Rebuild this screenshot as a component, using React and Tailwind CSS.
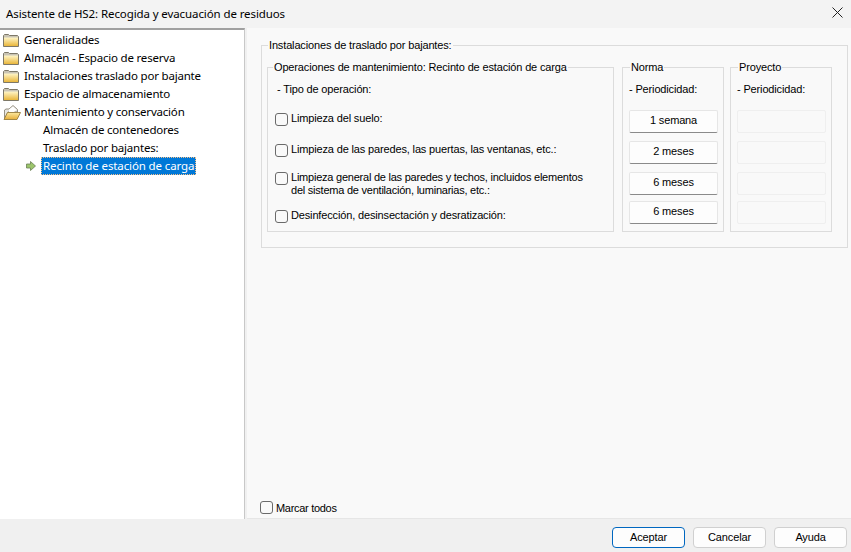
const treeFont = { fontFamily: '"Noto Sans", sans-serif' };

const FolderClosed = () => (
  <svg width="16" height="14" viewBox="0 0 16 14" className="shrink-0">
    <defs>
      <linearGradient id="fc" x1="0" y1="0" x2="0" y2="1">
        <stop offset="0" stopColor="#fff6c8" />
        <stop offset="1" stopColor="#e9b63c" />
      </linearGradient>
    </defs>
    <path d="M0.5 2.5 L1.5 1.5 H5.5 L6.5 2.5 H14.5 L15.5 3.5 V13.5 H0.5 Z" fill="#c9c4b4" stroke="#7d7868" />
    <path d="M1 4.5 H15 V13 H1 Z" fill="url(#fc)" />
  </svg>
);

const FolderOpen = () => (
  <svg width="18" height="15" viewBox="0 0 18 15" className="shrink-0">
    <defs>
      <linearGradient id="fo" x1="0" y1="0" x2="0" y2="1">
        <stop offset="0" stopColor="#fde9a0" />
        <stop offset="1" stopColor="#e6ae3a" />
      </linearGradient>
    </defs>
    <path d="M1.5 14 V5 L3 4 L6 4 L10 0.5 L14.5 4.5 V7 H5 Z" fill="#e8e6df" stroke="#8c8778" strokeWidth="0.9" />
    <path d="M6 4.5 L10 1.5 L13.5 4.8 L11 7 H6 Z" fill="#ffffff" />
    <path d="M1 14.5 L4.5 7.5 H17.5 L14 14.5 Z" fill="url(#fo)" stroke="#9a7f3c" strokeWidth="0.9" />
  </svg>
);

const ArrowIcon = () => (
  <svg width="10" height="10" viewBox="0 0 10 10" className="shrink-0">
    <path d="M0.5 3 H4.5 V0.5 L9.5 5 L4.5 9.5 V7 H0.5 Z" fill="#9cc56b" stroke="#6b7f55" strokeWidth="0.8" />
  </svg>
);

const Check = ({ className = '' }) => (
  <span className={`block w-[13px] h-[13px] shrink-0 rounded-[3px] border border-[#6a6a6a] bg-[#f9f9f9] ${className}`} />
);

const TreeFolder = ({ label, open }) => (
  <div className="h-[18px] flex items-center">
    <div className="w-6 pl-[3px] flex items-center">{open ? <FolderOpen /> : <FolderClosed />}</div>
    <span>{label}</span>
  </div>
);

const TreeLeaf = ({ label, selected }) => (
  <div className="h-[18px] flex items-center">
    <div className="w-[41px] pl-[26px] flex items-center">{selected && <ArrowIcon />}</div>
    <span className={selected ? 'h-[18px] px-[2px] flex items-center tracking-[-0.12px] bg-[#0078d7] text-white outline outline-1 -outline-offset-1 outline-dotted outline-[#f5c08a]' : 'px-[2px]'}>
      {label}
    </span>
  </div>
);

const Row = ({ children, className = '' }) => (
  <div className={`flex items-start ${className}`}>
    <Check className="mt-[1px]" />
    <div className="ml-[3px] leading-[13px] whitespace-nowrap">{children}</div>
  </div>
);

const GroupLegend = ({ children, className = '' }) => (
  <legend className={`px-[1px] h-[13px] leading-[13px] whitespace-nowrap ${className}`}>{children}</legend>
);

const NormaButton = ({ children, className = '' }) => (
  <button className={`block w-[89px] h-[23px] pb-[2px] bg-[#fdfdfd] border border-[#e6e6e6] border-b-[#8a8a8a] rounded-[2px] text-center ${className}`}>
    {children}
  </button>
);

const Blank = ({ className = '' }) => (
  <div className={`w-[89px] h-[23px] bg-[#f9f9f9] border border-[#efefef] rounded-[2px] ${className}`} />
);

const FooterButton = ({ children, primary }) => (
  <button className={`w-[73px] h-[21px] rounded-[4px] bg-[#fdfdfd] border ${primary ? 'border-[#0067c0]' : 'border-[#d0d0d0]'}`}>
    {children}
  </button>
);

export default function App() {
  return (
    <div className="w-[851px] h-[552px] flex flex-col overflow-hidden bg-[#f0f0f0] text-[11px] tracking-[-0.15px] text-black" style={{ fontFamily: '"Liberation Sans", sans-serif' }}>
      <div className="h-[28px] shrink-0 bg-[#f3f3f3] flex items-center justify-between pl-[6px] pr-[8px]">
        <span className="text-[11.5px] tracking-[-0.1px]" style={treeFont}>Asistente de HS2: Recogida y evacuación de residuos</span>
        <svg width="11" height="11" viewBox="0 0 11 11" className="-mt-[3px]">
          <path d="M0.5 0.5 L10.5 10.5 M10.5 0.5 L0.5 10.5" stroke="#222" strokeWidth="1" />
        </svg>
      </div>

      <div className="h-[491px] shrink-0 flex">
        <div className="w-[245px] shrink-0 bg-white border-t-2 border-r border-t-[#a0a0a0] border-r-[#c8c8c8] pt-[1px] text-[11.5px] tracking-[-0.2px]" style={treeFont}>
          <TreeFolder label="Generalidades" />
          <TreeFolder label="Almacén - Espacio de reserva" />
          <TreeFolder label="Instalaciones traslado por bajante" />
          <TreeFolder label="Espacio de almacenamiento" />
          <TreeFolder label="Mantenimiento y conservación" open />
          <TreeLeaf label="Almacén de contenedores" />
          <TreeLeaf label="Traslado por bajantes:" />
          <TreeLeaf label="Recinto de estación de carga" selected />
        </div>

        <div className="w-[604px] ml-[2px] bg-[#f9f9f9] border-b border-[#e6e6e6] pl-[14px] pt-[11px] pb-[2px] flex flex-col justify-between">
          <fieldset className="w-[587px] h-[209px] border border-[#dcdcdc] pl-[5px] pt-[9px]">
            <GroupLegend className="ml-[1px]">Instalaciones de traslado por bajantes:</GroupLegend>
            <div className="flex gap-[6px]">
              <fieldset className="w-[347px] h-[171px] mr-[2px] border border-[#dcdcdc] pl-[7px]">
                <GroupLegend className="-ml-[2px]">Operaciones de mantenimiento: Recinto de estación de carga</GroupLegend>
                <div className="pl-[2px] mt-[9px] leading-[13px]">- Tipo de operación:</div>
                <Row className="mt-[16px]">Limpieza del suelo:</Row>
                <Row className="mt-[17px]">Limpieza de las paredes, las puertas, las ventanas, etc.:</Row>
                <Row className="mt-[14px] tracking-[-0.23px]">
                  Limpieza general de las paredes y techos, incluidos elementos
                  <br />
                  del sistema de ventilación, luminarias, etc.:
                </Row>
                <Row className="mt-[12px]">Desinfección, desinsectación y desratización:</Row>
              </fieldset>
              <fieldset className="w-[102px] h-[171px] border border-[#dcdcdc] pl-[6px]">
                <GroupLegend className="ml-[1px]">Norma</GroupLegend>
                <div className="mt-[9px] leading-[13px]">- Periodicidad:</div>
                <NormaButton className="mt-[14px]">1 semana</NormaButton>
                <NormaButton className="mt-[8px]">2 meses</NormaButton>
                <NormaButton className="mt-[8px]">6 meses</NormaButton>
                <NormaButton className="mt-[6px]">6 meses</NormaButton>
              </fieldset>
              <fieldset className="w-[102px] h-[171px] border border-[#dcdcdc] pl-[6px]">
                <GroupLegend className="ml-[1px]">Proyecto</GroupLegend>
                <div className="mt-[9px] leading-[13px]">- Periodicidad:</div>
                <Blank className="mt-[14px]" />
                <Blank className="mt-[8px]" />
                <Blank className="mt-[8px]" />
                <Blank className="mt-[6px]" />
              </fieldset>
            </div>
          </fieldset>

          <div className="flex items-center -ml-[1px]">
            <Check />
            <span className="ml-[3px] tracking-[-0.3px]">Marcar todos</span>
          </div>
        </div>
      </div>

      <div className="flex-1 flex justify-end items-start pt-[8px] pr-[4px] gap-[8px]">
        <FooterButton primary>Aceptar</FooterButton>
        <FooterButton>Cancelar</FooterButton>
        <FooterButton>Ayuda</FooterButton>
      </div>
    </div>
  );
}
